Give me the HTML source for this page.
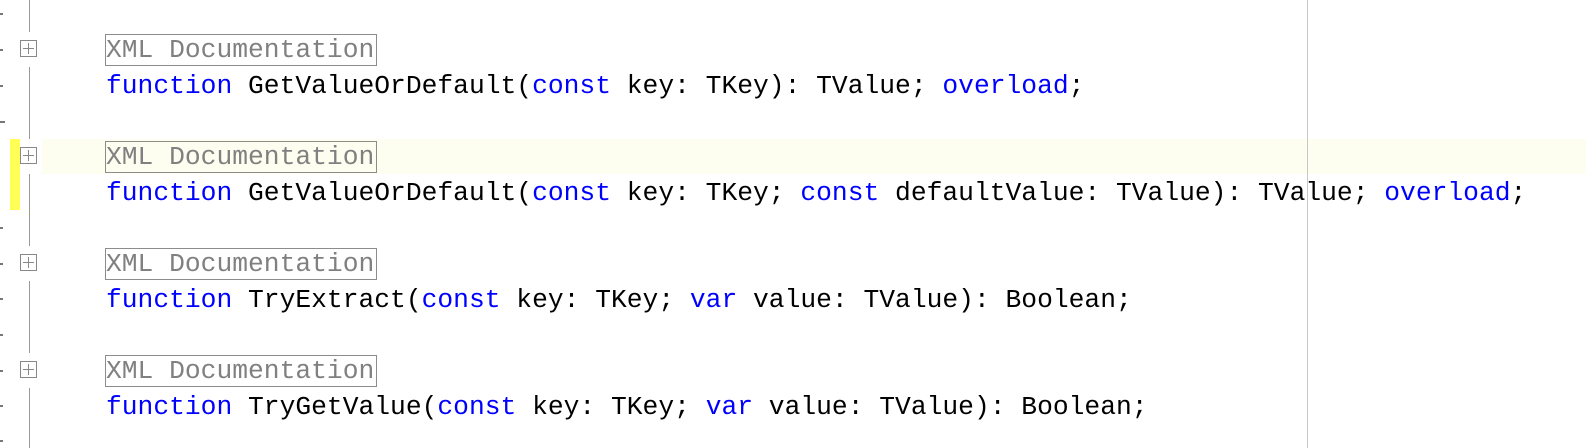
<!DOCTYPE html>
<html><head><style>
html,body{margin:0;padding:0;background:#fff;width:1586px;height:448px;overflow:hidden;position:relative}
.mono{font-family:"Liberation Mono",monospace;font-size:26.3px;white-space:pre;color:#000}
.row{position:absolute;left:106px;height:35.67px;line-height:35.67px}
.k{color:#0000ff}
.doc{color:#808080;outline:1.5px solid #8c8c8c;outline-offset:0;padding:0 2px 0 0}
.hl{position:absolute;left:42px;right:0;top:139px;height:35px;background:#fefef0}
.vline{position:absolute;left:29px;width:1px;background:#999}
.fold{position:absolute;left:20px;width:17px;height:17px;border:1px solid #888;box-sizing:border-box;background:#fff}
.fold:before{content:"";position:absolute;left:7px;top:2px;width:1px;height:11px;background:#888}
.fold:after{content:"";position:absolute;left:2px;top:7px;width:11px;height:1px;background:#888}
.margin{position:absolute;left:1307px;top:0;height:448px;width:1px;background:#c8c8c8}
.dot{position:absolute;left:0;width:3px;height:2px;background:#777}
</style></head><body>
<div class="hl"></div>
<div class="margin"></div>
<div style="position:absolute;left:10px;top:139px;width:10px;height:71px;background:#ffff55"></div>
<div class="vline" style="top:0;height:32px"></div>
<div class="vline" style="top:67px;height:72px"></div>
<div class="vline" style="top:174px;height:72px"></div>
<div class="vline" style="top:281px;height:72px"></div>
<div class="vline" style="top:388px;height:60px"></div>
<div class="fold" style="top:40px"></div>
<div class="fold" style="top:147px"></div>
<div class="fold" style="top:254px"></div>
<div class="fold" style="top:361px"></div>
<div class="dot" style="top:13px"></div><div class="dot" style="top:49px"></div><div class="dot" style="top:85px"></div>
<div class="dot" style="top:121px;width:5px"></div>
<div class="dot" style="top:227px"></div><div class="dot" style="top:263px"></div><div class="dot" style="top:298px"></div><div class="dot" style="top:334px"></div>
<div class="dot" style="top:370px"></div><div class="dot" style="top:405px"></div><div class="dot" style="top:440px"></div>
<div class="mono">
<div class="row" style="top:32.5px"><span class="doc">XML Documentation</span></div>
<div class="row" style="top:69px"><span class="k">function</span> GetValueOrDefault(<span class="k">const</span> key: TKey): TValue; <span class="k">overload</span>;</div>
<div class="row" style="top:139.5px"><span class="doc">XML Documentation</span></div>
<div class="row" style="top:176px"><span class="k">function</span> GetValueOrDefault(<span class="k">const</span> key: TKey; <span class="k">const</span> defaultValue: TValue): TValue; <span class="k">overload</span>;</div>
<div class="row" style="top:246.5px"><span class="doc">XML Documentation</span></div>
<div class="row" style="top:283px"><span class="k">function</span> TryExtract(<span class="k">const</span> key: TKey; <span class="k">var</span> value: TValue): Boolean;</div>
<div class="row" style="top:353.5px"><span class="doc">XML Documentation</span></div>
<div class="row" style="top:390px"><span class="k">function</span> TryGetValue(<span class="k">const</span> key: TKey; <span class="k">var</span> value: TValue): Boolean;</div>
</div>
</body></html>
